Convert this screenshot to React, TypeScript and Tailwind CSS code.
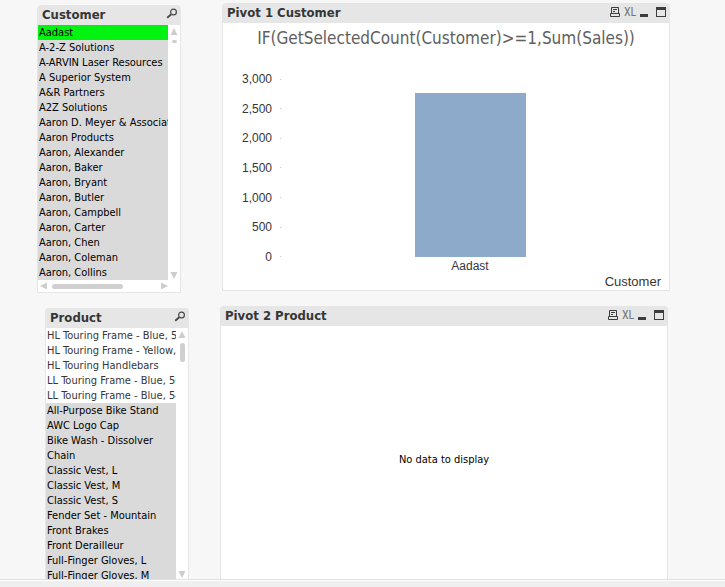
import { useState, type ReactNode } from "react";

const customers = [
  "Aadast", "A-2-Z Solutions", "A-ARVIN Laser Resources", "A Superior System",
  "A&R Partners", "A2Z Solutions", "Aaron D. Meyer & Associates", "Aaron Products",
  "Aaron, Alexander", "Aaron, Baker", "Aaron, Bryant", "Aaron, Butler",
  "Aaron, Campbell", "Aaron, Carter", "Aaron, Chen", "Aaron, Coleman", "Aaron, Collins",
];

const possibleProducts = [
  "HL Touring Frame - Blue, 50", "HL Touring Frame - Yellow, 50", "HL Touring Handlebars",
  "LL Touring Frame - Blue, 50", "LL Touring Frame - Blue, 54",
];

const excludedProducts = [
  "All-Purpose Bike Stand", "AWC Logo Cap", "Bike Wash - Dissolver", "Chain",
  "Classic Vest, L", "Classic Vest, M", "Classic Vest, S", "Fender Set - Mountain",
  "Front Brakes", "Front Derailleur", "Full-Finger Gloves, L", "Full-Finger Gloves, M",
];

const axisLabels = ["3,000", "2,500", "2,000", "1,500", "1,000", "500", "0"];
const axisMax = 3000;
const aadastSales = 2770;

type RowState = "selected" | "possible" | "excluded";

const rowStyles: Record<RowState, string> = {
  selected: "bg-[#00f410] text-black",
  possible: "bg-white text-[#363636]",
  excluded: "bg-[#dadada] text-black",
};

function SearchIcon() {
  return (
    <svg width="12" height="12" viewBox="0 0 12 12" fill="none" stroke="#484848" className="block">
      <circle cx="7.5" cy="4" r="2.9" strokeWidth="1.2" />
      <path d="M5.3 6.2 1.2 9.8" strokeWidth="1.8" />
    </svg>
  );
}

function Arrow({ direction }: { direction: "up" | "down" | "left" | "right" }) {
  const shapes = {
    up: "M4 0 7.5 7h-7z",
    down: "M.5 1h7L4 8z",
    left: "M0 4 7 .5v7z",
    right: "M8 4 1 .5v7z",
  };
  return (
    <button type="button" aria-label={`Scroll ${direction}`} className="shrink-0">
      <svg width="8" height="8" viewBox="0 0 8 8" fill="#cdcdcd" className="block">
        <path d={shapes[direction]} />
      </svg>
    </button>
  );
}

function Row({ text, state, onPick }: { text: string; state: RowState; onPick?: () => void }) {
  return (
    <li>
      <button
        type="button"
        onClick={onPick}
        aria-pressed={state === "selected"}
        className={`block h-[15px] w-full overflow-hidden whitespace-nowrap pl-px text-left text-[11px] leading-[14px] ${rowStyles[state]}`}
      >
        {text}
      </button>
    </li>
  );
}

function ListBox({ title, className, thumb, footer, children }: {
  title: string;
  className: string;
  thumb: string;
  footer?: ReactNode;
  children: ReactNode;
}) {
  return (
    <section className={`flex flex-col rounded-t-sm border border-[#e6e6e6] bg-white ${className}`}>
      <header className="flex h-[19px] shrink-0 items-center justify-between bg-[#e6e6e6] pb-0.5 pl-1 pr-0.5">
        <h2 className="text-[13px] leading-4 font-bold text-[#363636]">{title}</h2>
        <button type="button" aria-label={`Search ${title}`} className="pb-0.5"><SearchIcon /></button>
      </header>
      <div className="flex min-h-0 flex-1">
        <ul className="min-w-0 flex-1 overflow-hidden">{children}</ul>
        <div className="flex w-3 shrink-0 flex-col items-center justify-between pb-px pt-[3px]">
          <div className="flex flex-col items-center gap-1">
            <Arrow direction="up" />
            <span className={`w-[5px] rounded-full bg-[#d0d0d0] ${thumb}`} />
          </div>
          <Arrow direction="down" />
        </div>
      </div>
      {footer}
    </section>
  );
}

function PanelButtons() {
  return (
    <div className="flex items-center pb-0.5">
      <button type="button" aria-label="Print" className="mr-1">
        <svg width="10" height="10" viewBox="0 0 10 10" fill="none" stroke="#3c3c3c" className="block">
          <path d="M1.5 6V.5h7V6M.5 6.5h9v3h-9zM3 2.5h4M3 4.5h2" />
        </svg>
      </button>
      <button type="button" aria-label="Send to Excel" className="mr-1 w-3 font-['Liberation_Sans_Narrow','Roboto_Condensed',Roboto,sans-serif] text-xs leading-3 text-[#777]">
        XL
      </button>
      <button type="button" aria-label="Minimize" className="mr-2">
        <svg width="8" height="10" viewBox="0 0 8 10" className="block"><path d="M0 7h8v3H0z" fill="#3c3c3c" /></svg>
      </button>
      <button type="button" aria-label="Maximize">
        <svg width="10" height="10" viewBox="0 0 10 10" className="block">
          <path d="M0 0h10v10H0zM1 3v6h8V3z" fill="#3c3c3c" fillRule="evenodd" />
        </svg>
      </button>
    </div>
  );
}

function Panel({ title, className, children }: { title: string; className: string; children: ReactNode }) {
  return (
    <section className={`flex flex-col rounded-t-sm border border-[#e6e6e6] bg-white ${className}`}>
      <header className="flex h-[19px] shrink-0 items-center justify-between bg-[#e6e6e6] pb-0.5 pl-1 pr-[3px]">
        <h2 className="text-[13px] leading-4 font-bold text-[#363636]">{title}</h2>
        <PanelButtons />
      </header>
      {children}
    </section>
  );
}

function SalesChart() {
  return (
    <figure className="flex flex-1 flex-col text-[#363636]">
      <figcaption className="pt-1 text-center text-[17px] leading-[22px] text-[#606060]">
        IF(GetSelectedCount(Customer)&gt;=1,Sum(Sales))
      </figcaption>
      <div className="mt-[22px] flex items-start pr-2.5 font-['Liberation_Sans',Arial,sans-serif] text-xs">
        <ol className="flex h-[194px] w-[58px] flex-col justify-between">
          {axisLabels.map((label) => (
            <li key={label} className="flex h-4 items-center justify-end gap-2 leading-4">
              {label}
              <span className="h-px w-px bg-[#c4c4c4]" />
            </li>
          ))}
        </ol>
        <div className="flex-1 pt-2">
          <div className="flex h-[178px] items-end justify-center">
            <div
              className="w-[111px] bg-[#8daaca]"
              style={{ height: `${(aadastSales / axisMax) * 100}%` }}
            />
          </div>
          <p className="text-center leading-[18px]">Aadast</p>
        </div>
      </div>
      <p className="pr-2 text-right font-['Liberation_Sans',Arial,sans-serif] text-[13px] leading-[14px]">Customer</p>
    </figure>
  );
}

export default function App() {
  const [picked, setPicked] = useState("Aadast");
  return (
    <div className="flex h-screen flex-col bg-[#f7f7f7] font-['DejaVu_Sans_Condensed',Tahoma,sans-serif]">
      <main className="flex min-h-0 flex-1 overflow-hidden pl-[37px] pr-[55px]">
        <div className="flex w-[152px] shrink-0 flex-col gap-[15px] pt-[5px]">
          <ListBox
            title="Customer"
            className="mr-2 shrink-0"
            thumb="h-[3px]"
            footer={
              <div className="flex h-3 items-center gap-1 pl-0.5 pr-3">
                <Arrow direction="left" />
                <div className="flex-1"><div className="h-[5px] w-[71px] rounded-full bg-[#d0d0d0]" /></div>
                <Arrow direction="right" />
              </div>
            }
          >
            {customers.map((name) => (
              <Row key={name} text={name} state={name === picked ? "selected" : "excluded"} onPick={() => setPicked(name)} />
            ))}
          </ListBox>
          <ListBox title="Product" className="ml-2 min-h-0 flex-1 border-b-0" thumb="h-[19px]">
            {possibleProducts.map((name) => <Row key={name} text={name} state="possible" />)}
            {excludedProducts.map((name) => <Row key={name} text={name} state="excluded" />)}
          </ListBox>
        </div>
        <div className="ml-[31px] flex min-w-0 flex-1 flex-col gap-[15px] pt-[3px]">
          <Panel title="Pivot 1 Customer" className="ml-0.5 h-72 shrink-0">
            <SalesChart />
          </Panel>
          <Panel title="Pivot 2 Product" className="mr-0.5 min-h-0 flex-1 border-b-0">
            <p className="flex flex-1 items-center justify-center pt-4 text-[11px] text-black">No data to display</p>
          </Panel>
        </div>
      </main>
      <footer className="h-2 shrink-0 border-t border-[#e0e0e0] bg-white pt-px">
        <div className="h-full bg-[#efefef]" />
      </footer>
    </div>
  );
}
